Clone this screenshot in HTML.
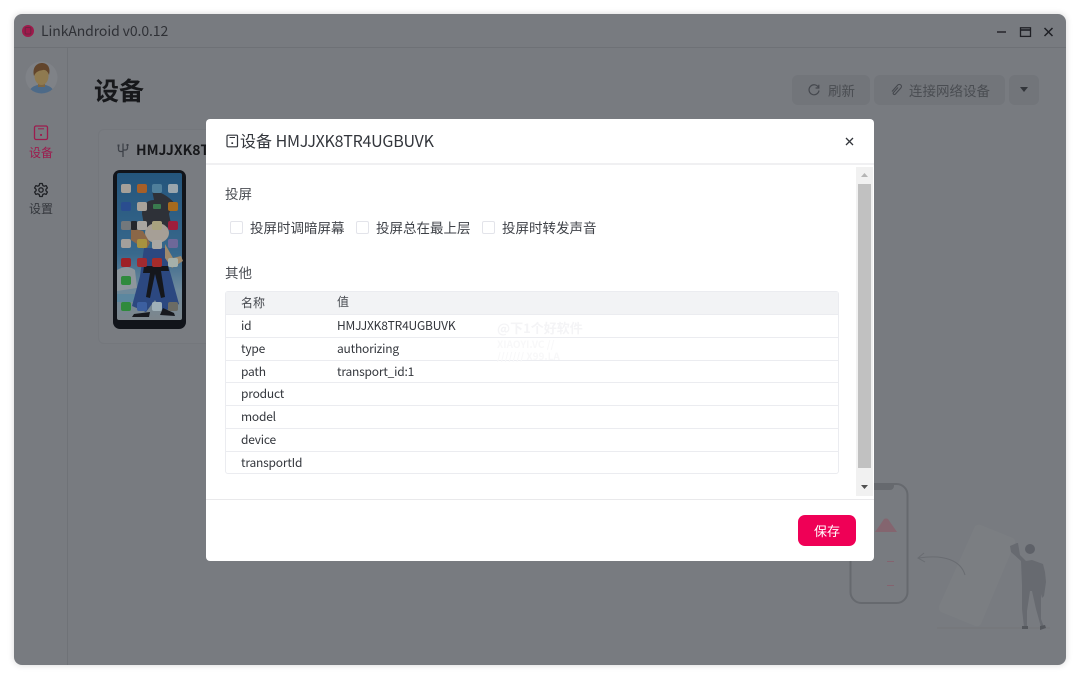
<!DOCTYPE html>
<html><head><meta charset="utf-8">
<style>
*{box-sizing:border-box;margin:0;padding:0}
html,body{width:1080px;height:679px;overflow:hidden;background:#fff;font-family:"Noto Sans CJK SC","Liberation Sans",sans-serif}
.a{position:absolute;white-space:nowrap}
#win{position:absolute;left:14px;top:14px;width:1052px;height:651px;background:#787b80;border-radius:8px;box-shadow:0 0 7px rgba(0,0,0,.16);overflow:hidden}
#stage{position:absolute;left:0;top:0;width:1080px;height:679px}
.btn{position:absolute;top:75px;height:30px;background:#72757a;border-radius:6px;color:#4a4d52;font-size:13.5px;line-height:30px}
.cb{position:absolute;top:221px;width:13px;height:13px;border:1px solid #e3e4ea;border-radius:2px;background:#fff}
.lbl{position:absolute;top:218px;font-size:13.5px;line-height:18px;color:#3f4248;white-space:nowrap}
.rowline{position:absolute;left:226px;width:612px;height:1px;background:#ebecf0}
.t{position:absolute;font-size:12px;line-height:16px;color:#33363c;white-space:nowrap;letter-spacing:-.2px}
.h{letter-spacing:0}
</style></head><body>
<div id="win"></div>
<div id="stage">
<!-- illustration -->
<svg class="a" style="left:0;top:0" width="1080" height="679" viewBox="0 0 1080 679">
<rect x="850.500" y="484" width="57" height="119" rx="11" fill="none" stroke="#66696e" stroke-width="2"/>
<path d="M868 484h26v2a4 4 0 0 1-4 4h-18a4 4 0 0 1-4-4z" fill="#66696e"/>
<path d="M875 532l5-7 4-6q2-1 4 0l9 13z" fill="#84656f"/>
<rect x="887" y="561" width="7" height="1" fill="#85636f"/><rect x="887" y="585" width="7" height="1" fill="#85636f"/>
<path d="M975 526q3-2 6-1l32 13q3 2 2 5l-34 81q-2 3-6 2l-34-14q-3-2-2-6z" fill="#7b7e82"/>
<path d="M965 575c-4-14-20-21-46-17M924 553l-6 5 7 4" fill="none" stroke="#696c71" stroke-width="1"/>
<path d="M937 628h113" stroke="#737679" stroke-width="1"/>
<circle cx="1030" cy="549" r="5" fill="#5e6168"/>
<path d="M1017 543l1 0 2 12 6 6 6-1 11 4 2 8 1 10-2 14-2 2-1-4v25l3 8-3 0-5-18-4-18-2 0-3 20v16h-3l-2-18v-24l-1-24-10-9-1-6z" fill="#676a70"/>
<path d="M1022 626h6v3h-6zM1040 626l5-1 1 3-6 2z" fill="#54575c"/>
</svg>
<!-- title bar -->
<div class="a" style="left:14px;top:47px;width:1052px;height:1px;background:#6e7176"></div>
<div class="a" style="left:67px;top:48px;width:1px;height:617px;background:#6f7277"></div>
<svg class="a" style="left:21px;top:24px" width="14" height="14" viewBox="0 0 14 14"><circle cx="7" cy="7" r="6" fill="#9e1a4b"/><rect x="4.200" y="3.500" width="5.600" height="6.500" rx="1" fill="none" stroke="#6c2440" stroke-width="1"/></svg>
<div class="a" style="left:41px;top:22px;font-size:14px;line-height:18px;color:#2f3136;letter-spacing:-.1px">LinkAndroid v0.0.12</div>
<svg class="a" style="left:994px;top:24px" width="64" height="16" viewBox="0 0 64 16" fill="none" stroke="#1f2025" stroke-width="1.400"><path d="M3 8h9"/><rect x="26.500" y="3.800" width="10" height="8.600" stroke-width="1.300"/><path d="M26.500 6h10" stroke-width="1.600"/><path d="M50.500 4l8 8M58.500 4l-8 8" stroke-width="1.500"/></svg>
<!-- avatar -->
<svg class="a" style="left:25px;top:61px" width="33" height="33" viewBox="0 0 33 33"><circle cx="16.500" cy="16.500" r="16" fill="#7f8287"/><clipPath id="c"><circle cx="16.500" cy="16.500" r="16"/></clipPath><g clip-path="url(#c)"><ellipse cx="16.500" cy="33" rx="13" ry="9.500" fill="#4d6a88"/><rect x="13" y="20" width="7" height="6" fill="#7d6645"/><ellipse cx="16.500" cy="15" rx="7" ry="9" fill="#8f7a50"/><path d="M9 15C7 6 12 2 17 2S26 6 24 14C23 11 21 8.500 18 9S11 10 9 15z" fill="#62452c"/></g></svg>
<!-- sidebar -->
<svg class="a" style="left:33px;top:124px" width="16" height="17" viewBox="0 0 16 17" fill="none" stroke="#9c1c4e" stroke-width="1.300"><rect x="1.500" y="2" width="13" height="13.500" rx="1.500"/><path d="M5 4.800h6" stroke-width="1"/><rect x="7.100" y="10" width="1.900" height="1.900" fill="#9c1c4e" stroke="none"/></svg>
<div class="a" style="left:29px;top:145px;font-size:12px;line-height:16px;color:#9c1c4e">设备</div>
<svg class="a" style="left:33px;top:182px" width="16" height="16" viewBox="0 0 16 16" fill="none" stroke="#1f2125" stroke-width="1.300"><path d="M6.700 1.500h2.600l.5 2 1.300.7 2-.6 1.300 2.300-1.500 1.400v1.400l1.500 1.400-1.300 2.300-2-.6-1.300.7-.5 2H6.700l-.5-2-1.300-.7-2 .6-1.300-2.300 1.500-1.400V7.300L1.600 5.900l1.300-2.300 2 .6 1.300-.7z" stroke-linejoin="round"/><circle cx="8" cy="8" r="2.200"/></svg>
<div class="a" style="left:29px;top:201px;font-size:12px;line-height:16px;color:#33363b">设置</div>
<!-- header -->
<div class="a" style="left:94px;top:74px;font-size:25px;line-height:33px;font-weight:700;color:#17181b">设备</div>
<div class="btn" style="left:792px;width:78px"><svg class="a" style="left:15px;top:8px" width="14" height="14" viewBox="0 0 14 14" fill="none" stroke="#45484e" stroke-width="1.200"><path d="M11.500 4.500A5 5 0 1 0 12 7.500"/><path d="M11.800 1.800v3.200H8.600"/></svg><span class="a" style="left:36px;top:0">刷新</span></div>
<div class="btn" style="left:874px;width:131px"><svg class="a" style="left:15px;top:8px" width="14" height="14" viewBox="0 0 14 14" fill="none" stroke="#45484e" stroke-width="1.100"><path d="M9 4.500L4.500 9.500a1.200 1.200 0 0 0 1.800 1.600L11.800 5a2 2 0 0 0-3-3L3 8.500"/></svg><span class="a" style="left:35px;top:0">连接网络设备</span></div>
<div class="btn" style="left:1009px;width:30px"><svg class="a" style="left:9px;top:11px" width="12" height="8" viewBox="0 0 12 8"><path d="M2 1h8L6 6z" fill="#33363b"/></svg></div>
<!-- device card -->
<div class="a" style="left:98px;top:129px;width:130px;height:215px;border:1px solid #74777c;border-radius:6px;background:#797c81"></div>
<svg class="a" style="left:116px;top:142px" width="14" height="16" viewBox="0 0 14 16" fill="none" stroke="#3d4148" stroke-width="1.300"><path d="M7 1.500v13.500"/><path d="M2.500 4v3.500c0 1.300 1 2 2 2H7"/><path d="M11.500 3.500v2.500c0 1.300-1 2-2 2H7"/><rect x="1.500" y="2.500" width="2" height="2" fill="#3d4148" stroke="none"/><rect x="10.500" y="2" width="2" height="2" fill="#3d4148" stroke="none"/></svg>
<div class="a" style="left:136px;top:141px;font-size:14px;line-height:18px;font-weight:700;color:#17181b">HMJJXK8T</div>
<!-- phone -->
<svg class="a" style="left:113px;top:170px" width="73" height="159" viewBox="0 0 73 159">
<defs><linearGradient id="sky" x1="0" y1="0" x2="0" y2="1"><stop offset="0" stop-color="#24557c"/><stop offset=".55" stop-color="#38688c"/><stop offset=".8" stop-color="#6f8a9c"/><stop offset="1" stop-color="#7d868c"/></linearGradient></defs>
<rect width="73" height="159" rx="7" fill="#11141a"/>
<rect x="4" y="3" width="65" height="147" rx="2" fill="url(#sky)"/>
<path d="M4 100q10-6 18 0l2 18-20 3z" fill="#8d969c"/>
<path d="M4 124h20l-2 8H4z" fill="#5c879f"/>
<path d="M39 20c10 2 20 8 26 18-6 0-8 2-9 6l2 10-6 6H32l-3-16c0-8 4-14 12-14z" fill="#2e3138"/>
<ellipse cx="44" cy="63" rx="12" ry="10" fill="#a69f96"/>
<path d="M18 58l12 3 7 12-4 7-15-10z" fill="#8b6748"/>
<path d="M31 78h21l4 20 10 36-16 8-8-12-9 12-14-6 8-30z" fill="#2c4880"/>
<path d="M31 96h24l1 5-8 0 4 26-4 1-6-24-5 24-4-1 4-24-7 0z" fill="#15171c"/>
<path d="M52 74l8 14 8-2 2 5-11 7-7-10z" fill="#a08a6c"/>
<path d="M37 142l-16 2-2 3 17 0zM50 138l11 5 1 3-15-1z" fill="#17191e"/>
<g>
<rect x="8" y="14" width="10" height="9" rx="2" fill="#a5a099"/><rect x="24" y="14" width="10" height="9" rx="2" fill="#a65f28"/><rect x="39" y="14" width="10" height="9" rx="2" fill="#4f7f9b"/><rect x="55" y="14" width="10" height="9" rx="2" fill="#9aa6ad"/>
<rect x="8" y="32" width="10" height="9" rx="2" fill="#2a4d8f"/><rect x="24" y="32" width="10" height="9" rx="2" fill="#a8a29a"/><rect x="40" y="34" width="8" height="5" rx="1" fill="#3a7a4e"/><rect x="55" y="32" width="10" height="9" rx="2" fill="#a76a1d"/>
<rect x="8" y="51" width="10" height="9" rx="2" fill="#73787c"/><rect x="18" y="51" width="6" height="9" rx="1" fill="#23262b"/><rect x="24" y="51" width="10" height="9" rx="2" fill="#a9a6a1"/><rect x="39" y="51" width="10" height="9" rx="2" fill="#a8a27f"/><rect x="55" y="51" width="10" height="9" rx="2" fill="#9e1e3c"/>
<rect x="8" y="69" width="10" height="9" rx="2" fill="#a3a09c"/><rect x="24" y="69" width="10" height="9" rx="2" fill="#a7923f"/><rect x="39" y="70" width="10" height="9" rx="2" fill="#a9a7a3"/><rect x="55" y="69" width="10" height="9" rx="2" fill="#6e6899"/>
<rect x="8" y="88" width="10" height="9" rx="2" fill="#9e2026"/><rect x="24" y="88" width="10" height="9" rx="2" fill="#a02a30"/><rect x="39" y="88" width="10" height="9" rx="2" fill="#a62c2a"/><rect x="55" y="88" width="10" height="9" rx="2" fill="#a5b0aa"/>
<rect x="8" y="106" width="10" height="9" rx="2" fill="#2f8a3d"/>
<rect x="8" y="132" width="10" height="9" rx="2" fill="#2f8a3d"/><rect x="24" y="132" width="10" height="9" rx="2" fill="#3c5fa0"/><rect x="39" y="132" width="10" height="9" rx="2" fill="#9fb0b8"/><rect x="55" y="132" width="10" height="9" rx="2" fill="#6b6b64"/>
</g>
</svg>
<!-- modal -->
<div class="a" style="left:206px;top:119px;width:668px;height:442px;background:#fff;border-radius:4px"></div>
<div class="a" style="left:206px;top:163px;width:668px;height:2px;background:#f0f0f2"></div>
<svg class="a" style="left:226px;top:134px" width="13" height="14" viewBox="0 0 13 14" fill="none" stroke="#33363c" stroke-width="1.200"><rect x="1" y="1.200" width="10.500" height="11.600" rx="1"/><path d="M3.500 3.500h5.500" stroke-width="1"/><rect x="5.400" y="8.300" width="1.700" height="1.700" fill="#33363c" stroke="none"/></svg>
<div class="a" style="left:240px;top:130px;font-size:16px;line-height:21px;color:#33363c">设备 <span style="letter-spacing:-.25px">HMJJXK8TR4UGBUVK</span></div>
<svg class="a" style="left:844px;top:136px" width="11" height="11" viewBox="0 0 11 11" fill="none" stroke="#33363c" stroke-width="1.300"><path d="M2 2l7 7M9 2l-7 7"/></svg>
<div class="a" style="left:225px;top:185px;font-size:13.500px;line-height:17px;color:#4a4d53">投屏</div>
<div class="cb" style="left:230px"></div><div class="lbl" style="left:250px">投屏时调暗屏幕</div>
<div class="cb" style="left:356px"></div><div class="lbl" style="left:376px">投屏总在最上层</div>
<div class="cb" style="left:482px"></div><div class="lbl" style="left:502px">投屏时转发声音</div>
<div class="a" style="left:225px;top:264px;font-size:13.500px;line-height:17px;color:#4a4d53">其他</div>
<!-- table -->
<div class="a" style="left:225px;top:291px;width:614px;height:183px;border:1px solid #ebecf0;border-radius:3px;background:#fff"></div>
<div class="a" style="left:226px;top:292px;width:612px;height:22px;background:#f2f3f5"></div>
<div class="rowline" style="top:314px"></div><div class="rowline" style="top:337px"></div><div class="rowline" style="top:360px"></div><div class="rowline" style="top:382px"></div><div class="rowline" style="top:405px"></div><div class="rowline" style="top:428px"></div><div class="rowline" style="top:451px"></div>
<div class="t h" style="left:241px;top:295px;color:#45484e">名称</div><div class="t h" style="left:337px;top:294px;color:#45484e">值</div>
<div class="t" style="left:241px;top:318px">id</div><div class="t" style="left:337px;top:318px">HMJJXK8TR4UGBUVK</div>
<div class="t" style="left:241px;top:341px">type</div><div class="t" style="left:337px;top:341px">authorizing</div>
<div class="t" style="left:241px;top:364px">path</div><div class="t" style="left:337px;top:364px">transport_id:1</div>
<div class="t" style="left:241px;top:386px">product</div>
<div class="t" style="left:241px;top:409px">model</div>
<div class="t" style="left:241px;top:432px">device</div>
<div class="t" style="left:241px;top:455px">transportId</div>
<!-- watermark -->
<div class="a" style="left:497px;top:319px;font-size:13px;line-height:17px;font-weight:700;color:#f4f4f6">@下1个好软件</div>
<div class="a" style="left:497px;top:337px;font-size:10px;line-height:13px;font-weight:700;color:#f8f8f9">XIAOYI.VC //</div>
<div class="a" style="left:497px;top:349px;font-size:10px;line-height:13px;font-weight:700;color:#f8f8f9">/////// X99.LA</div>
<!-- scrollbar -->
<div class="a" style="left:856px;top:167px;width:17px;height:329px;background:#f1f1f1"></div>
<div class="a" style="left:858px;top:184px;width:13px;height:284px;background:#c1c1c1"></div>
<svg class="a" style="left:860px;top:172px" width="9" height="6" viewBox="0 0 9 6"><path d="M1 5h7L4.500 1z" fill="#b5b5b5"/></svg>
<svg class="a" style="left:860px;top:484px" width="9" height="6" viewBox="0 0 9 6"><path d="M1 1h7L4.500 5z" fill="#505050"/></svg>
<!-- footer -->
<div class="a" style="left:206px;top:499px;width:668px;height:1px;background:#e9e9eb"></div>
<div class="a" style="left:798px;top:515px;width:58px;height:31px;background:#ef0056;border-radius:7px;color:#fff;font-size:13px;line-height:31px;text-align:center">保存</div>
</div>
</body></html>
